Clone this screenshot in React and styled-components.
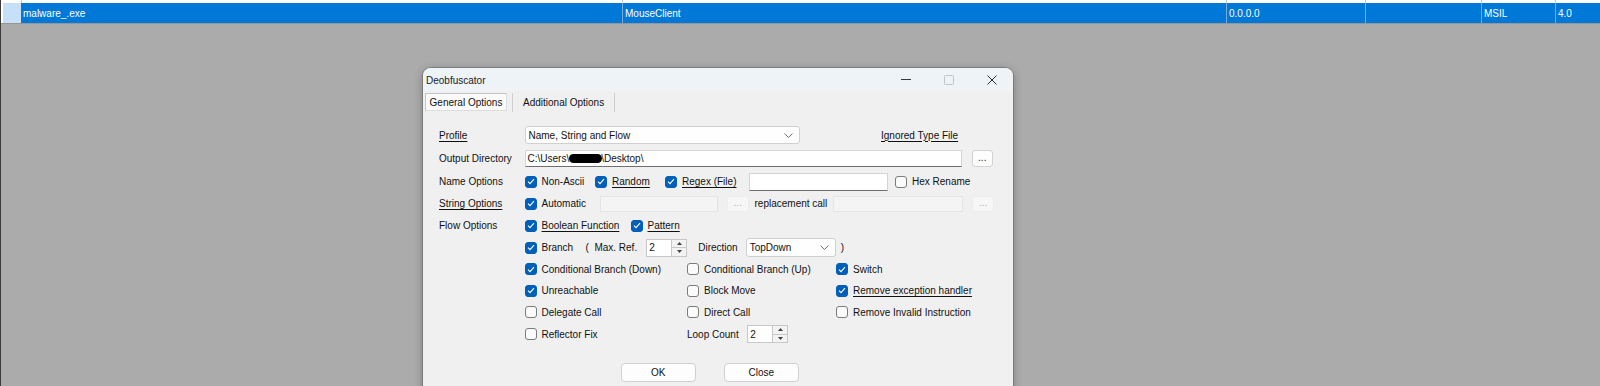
import React from "react";
import styled, { createGlobalStyle } from "styled-components";

const Global = createGlobalStyle`
  html, body {
    margin: 0;
    padding: 0;
  }
  body {
    width: 1600px;
    height: 386px;
    overflow: hidden;
    background: #ababab;
    font-family: "Liberation Sans", Arial, sans-serif;
    font-size: 10px;
    color: #111;
  }
`;

const Desktop = styled.div`
  width: 1600px;
  height: 386px;
  box-sizing: border-box;
  border-left: 1px solid #3a3a3a;
  background: #ababab;
  overflow: hidden;
`;

/* ---------- list view behind the dialog ---------- */

const List = styled.div`
  background: #fff;
  padding-left: 2px;
  border-bottom: 1px solid #969696;
`;

const ListRow = styled.div`
  display: grid;
  grid-template-columns: 18px 601px 604px 139px 116px 74px 1fr;
  height: ${(p) => p.$h}px;
  background: ${(p) => (p.$selected ? "#0078d7" : "#fff")};
  color: #fff;
`;

const Cell = styled.div`
  display: flex;
  align-items: center;
  padding-left: 2px;
  border-left: ${(p) => (p.$first ? "none" : `1px solid ${p.$line}`)};
  background: ${(p) => p.$bg || "transparent"};
  white-space: nowrap;
  overflow: hidden;
`;

/* ---------- dialog window ---------- */

const Window = styled.div`
  width: 590px;
  height: 340px;
  margin: 44px 0 0 422px;
  background: #f0f0f0;
  border-radius: 8px 8px 0 0;
  box-shadow: 0 0 0 1px rgba(90, 90, 90, 0.45), 0 2px 10px rgba(0, 0, 0, 0.3);
  overflow: hidden;
`;

const TitleBar = styled.div`
  height: 23px;
  display: flex;
  align-items: center;
  background: #eef3f8;
  padding-left: 3px;
`;

const Title = styled.div`
  flex: 1;
  color: #1b1b1b;
  padding-top: 1px;
`;

const CaptionButton = styled.div`
  width: 43px;
  height: 23px;
  display: flex;
  align-items: center;
  justify-content: center;
`;

const TabStrip = styled.div`
  display: flex;
  align-items: center;
  height: 18px;
  margin-top: 2px;
  padding-left: 2px;
`;

const Tab = styled.div`
  height: 18px;
  box-sizing: border-box;
  display: flex;
  align-items: center;
  justify-content: center;
  white-space: nowrap;
  padding: ${(p) => (p.$active ? "0" : "0 10px")};
  width: ${(p) => (p.$active ? "82px" : "auto")};
  background: ${(p) => (p.$active ? "#fbfbfb" : "transparent")};
  border: ${(p) => (p.$active ? "1px solid #c4c4c4" : "none")};
  border-right-color: #dcdcdc;
  border-bottom-color: #dcdcdc;
`;

const TabSep = styled.div`
  width: 1px;
  height: 19px;
  background: #cfcfcf;
  margin-left: ${(p) => p.$ml || 0}px;
`;

const Body = styled.div`
  padding: 12px 0 0 16px;
`;

const FormRow = styled.div`
  display: grid;
  grid-template-columns: 85.5px 1fr;
  align-items: center;
  height: ${(p) => p.$h}px;
`;

const Label = styled.span`
  white-space: nowrap;
  text-decoration: ${(p) => (p.$u ? "underline" : "none")};
  text-underline-offset: 2px;
  margin-left: ${(p) => p.$ml || 0}px;
`;

const Controls = styled.div`
  display: flex;
  align-items: center;
`;

const Columns = styled.div`
  display: grid;
  grid-template-columns: 162.5px 149px 1fr;
  align-items: center;
`;

const CheckItem = styled.div`
  display: inline-flex;
  align-items: center;
  gap: 5px;
  width: ${(p) => (p.$w ? `${p.$w}px` : "auto")};
  flex-shrink: 0;
  white-space: nowrap;
`;

const Box = styled.span`
  width: 12px;
  height: 12px;
  box-sizing: border-box;
  border-radius: 3px;
  display: inline-flex;
  align-items: center;
  justify-content: center;
  background: ${(p) => (p.$on ? "#005fb8" : "#fbfbfb")};
  border: 1px solid ${(p) => (p.$on ? "#005fb8" : "#7c7c7c")};
`;

const Field = styled.div`
  width: ${(p) => p.$w}px;
  height: ${(p) => p.$h || 17}px;
  margin-left: ${(p) => p.$ml || 0}px;
  margin-right: ${(p) => p.$mr || 0}px;
  box-sizing: border-box;
  display: flex;
  align-items: center;
  padding-left: 2px;
  background: ${(p) => (p.$disabled ? "#f4f4f4" : "#fff")};
  border: 1px solid ${(p) => (p.$disabled ? "#e4e4e4" : "#d4d4d4")};
  border-bottom-color: ${(p) => (p.$disabled ? "#e4e4e4" : "#6f6f6f")};
  white-space: nowrap;
  overflow: hidden;
  flex-shrink: 0;
`;

const Redact = styled.span`
  display: inline-block;
  width: 33px;
  height: 9px;
  border-radius: 5px;
  background: #000;
  margin: 0 -1px 0 0;
`;

const Combo = styled.div`
  width: ${(p) => p.$w}px;
  height: ${(p) => p.$h || 18}px;
  margin-left: ${(p) => p.$ml || 0}px;
  box-sizing: border-box;
  display: flex;
  align-items: center;
  justify-content: space-between;
  padding: 0 6px 0 3px;
  background: #fefefe;
  border: 1px solid #d0d0d0;
  border-radius: 3px;
  flex-shrink: 0;
`;

const DotsButton = styled.div`
  width: 21.5px;
  height: ${(p) => p.$h || 17}px;
  margin-left: ${(p) => p.$ml || 0}px;
  box-sizing: border-box;
  display: flex;
  align-items: flex-end;
  justify-content: center;
  padding-bottom: 3px;
  line-height: 1;
  border-radius: 3px;
  background: ${(p) => (p.$disabled ? "#f7f7f7" : "#fdfdfd")};
  border: 1px solid ${(p) => (p.$disabled ? "#ececec" : "#d2d2d2")};
  color: ${(p) => (p.$disabled ? "#b0b0b0" : "#222")};
  flex-shrink: 0;
`;

const Spin = styled.div`
  width: 41px;
  height: 18px;
  margin-left: ${(p) => p.$ml || 0}px;
  box-sizing: border-box;
  display: flex;
  background: #fff;
  border: 1px solid #c8c8c8;
  flex-shrink: 0;
`;

const SpinValue = styled.div`
  flex: 1;
  display: flex;
  align-items: center;
  padding-left: 2px;
`;

const SpinButtons = styled.div`
  width: 14px;
  display: flex;
  flex-direction: column;
  border-left: 1px solid #c8c8c8;
  background: #f3f3f3;
`;

const SpinPart = styled.div`
  flex: 1;
  display: flex;
  align-items: center;
  justify-content: center;
  border-top: ${(p) => (p.$down ? "1px solid #c8c8c8" : "none")};
`;

const ButtonRow = styled.div`
  display: flex;
  gap: 27.5px;
  margin: 18px 0 0 181.5px;
`;

const PushButton = styled.div`
  width: 75.5px;
  height: 19px;
  box-sizing: border-box;
  display: flex;
  align-items: center;
  justify-content: center;
  background: #fdfdfd;
  border: 1px solid #d0d0d0;
  border-radius: 4px;
`;

/* ---------- small drawings ---------- */

const Check = () => (
  <svg width="8" height="7" viewBox="0 0 8 7">
    <polyline points="1,3.6 3,5.6 7,1.2" fill="none" stroke="#fff" strokeWidth="1.1" />
  </svg>
);

const Chevron = () => (
  <svg width="9" height="5" viewBox="0 0 9 5">
    <polyline points="0.5,0.5 4.5,4.5 8.5,0.5" fill="none" stroke="#707070" strokeWidth="1" />
  </svg>
);

const Tri = ({ up }) => (
  <svg width="5" height="3" viewBox="0 0 5 3">
    <polygon points={up ? "2.5,0 5,3 0,3" : "0,0 5,0 2.5,3"} fill="#404040" />
  </svg>
);

function CheckBox({ on, children, w, u }) {
  return (
    <CheckItem $w={w}>
      <Box $on={on}>{on && <Check />}</Box>
      <Label $u={u}>{children}</Label>
    </CheckItem>
  );
}

function Numeric({ value, ml }) {
  return (
    <Spin $ml={ml}>
      <SpinValue>{value}</SpinValue>
      <SpinButtons>
        <SpinPart>
          <Tri up />
        </SpinPart>
        <SpinPart $down>
          <Tri />
        </SpinPart>
      </SpinButtons>
    </Spin>
  );
}

export default function App() {
  return (
    <Desktop>
      <Global />
      <List>
        <ListRow $h={3}>
          <Cell $first />
          <Cell $line="#c8c8c8" />
          <Cell $line="#c8c8c8" />
          <Cell $line="#c8c8c8" />
          <Cell $line="#c8c8c8" />
          <Cell $line="#c8c8c8" />
          <Cell $line="#c8c8c8" />
        </ListRow>
        <ListRow $h={20} $selected>
          <Cell $first $bg="#c6e0f7" />
          <Cell $first>malware_.exe</Cell>
          <Cell $line="#7aa9d6">MouseClient</Cell>
          <Cell $line="#7aa9d6">0.0.0.0</Cell>
          <Cell $line="#7aa9d6" />
          <Cell $line="#7aa9d6">MSIL</Cell>
          <Cell $line="#7aa9d6">4.0</Cell>
        </ListRow>
      </List>

      <Window>
        <TitleBar>
          <Title>Deobfuscator</Title>
          <CaptionButton>
            <svg width="10" height="1" viewBox="0 0 10 1">
              <rect width="10" height="1" fill="#3a3a3a" />
            </svg>
          </CaptionButton>
          <CaptionButton>
            <svg width="10" height="10" viewBox="0 0 10 10">
              <rect x="0.5" y="0.5" width="9" height="9" rx="1" fill="none" stroke="#c4c4c4" />
            </svg>
          </CaptionButton>
          <CaptionButton>
            <svg width="10" height="10" viewBox="0 0 10 10">
              <path d="M0.5 0.5 L9.5 9.5 M9.5 0.5 L0.5 9.5" stroke="#2a2a2a" strokeWidth="1" />
            </svg>
          </CaptionButton>
        </TitleBar>

        <TabStrip>
          <Tab $active>General Options</Tab>
          <TabSep $ml={5} />
          <Tab>Additional Options</Tab>
          <TabSep />
        </TabStrip>

        <Body>
          <FormRow $h={24}>
            <Label $u>Profile</Label>
            <Controls>
              <Combo $w={275.5}>
                <span>Name, String and Flow</span>
                <Chevron />
              </Combo>
              <Label $u $ml={81}>Ignored Type File</Label>
            </Controls>
          </FormRow>

          <FormRow $h={23}>
            <Label>Output Directory</Label>
            <Controls>
              <Field $w={437.5}>
                C:\Users\<Redact />\Desktop\
              </Field>
              <DotsButton $ml={9.5}>...</DotsButton>
            </Controls>
          </FormRow>

          <FormRow $h={23}>
            <Label>Name Options</Label>
            <Controls>
              <CheckBox on w={70.5}>Non-Ascii</CheckBox>
              <CheckBox on u w={70}>Random</CheckBox>
              <CheckBox on u w={84}>Regex (File)</CheckBox>
              <Field $w={139} $h={18} $mr={7} />
              <CheckBox>Hex Rename</CheckBox>
            </Controls>
          </FormRow>

          <FormRow $h={21}>
            <Label $u>String Options</Label>
            <Controls>
              <CheckBox on w={75}>Automatic</CheckBox>
              <Field $w={118.5} $h={16} $disabled />
              <DotsButton $ml={9} $h={16} $disabled>...</DotsButton>
              <Label $ml={6}>replacement call</Label>
              <Field $w={130} $h={16} $ml={6} $disabled />
              <DotsButton $ml={9} $h={16} $disabled>...</DotsButton>
            </Controls>
          </FormRow>

          <FormRow $h={23}>
            <Label>Flow Options</Label>
            <Controls>
              <CheckBox on u w={106}>Boolean Function</CheckBox>
              <CheckBox on u>Pattern</CheckBox>
            </Controls>
          </FormRow>

          <FormRow $h={21}>
            <span />
            <Controls>
              <CheckBox on w={61}>Branch</CheckBox>
              <Label>(&nbsp; Max. Ref.</Label>
              <Numeric value="2" ml={9} />
              <Label $ml={11}>Direction</Label>
              <Combo $w={90} $h={19} $ml={8}>
                <span>TopDown</span>
                <Chevron />
              </Combo>
              <Label $ml={5}>)</Label>
            </Controls>
          </FormRow>

          <FormRow $h={22}>
            <span />
            <Columns>
              <CheckBox on>Conditional Branch (Down)</CheckBox>
              <CheckBox>Conditional Branch (Up)</CheckBox>
              <CheckBox on>Switch</CheckBox>
            </Columns>
          </FormRow>

          <FormRow $h={21}>
            <span />
            <Columns>
              <CheckBox on>Unreachable</CheckBox>
              <CheckBox>Block Move</CheckBox>
              <CheckBox on u>Remove exception handler</CheckBox>
            </Columns>
          </FormRow>

          <FormRow $h={22}>
            <span />
            <Columns>
              <CheckBox>Delegate Call</CheckBox>
              <CheckBox>Direct Call</CheckBox>
              <CheckBox>Remove Invalid Instruction</CheckBox>
            </Columns>
          </FormRow>

          <FormRow $h={22}>
            <span />
            <Columns>
              <CheckBox>Reflector Fix</CheckBox>
              <Controls>
                <Label>Loop Count</Label>
                <Numeric value="2" ml={8.5} />
              </Controls>
              <span />
            </Columns>
          </FormRow>

          <ButtonRow>
            <PushButton>OK</PushButton>
            <PushButton>Close</PushButton>
          </ButtonRow>
        </Body>
      </Window>
    </Desktop>
  );
}
